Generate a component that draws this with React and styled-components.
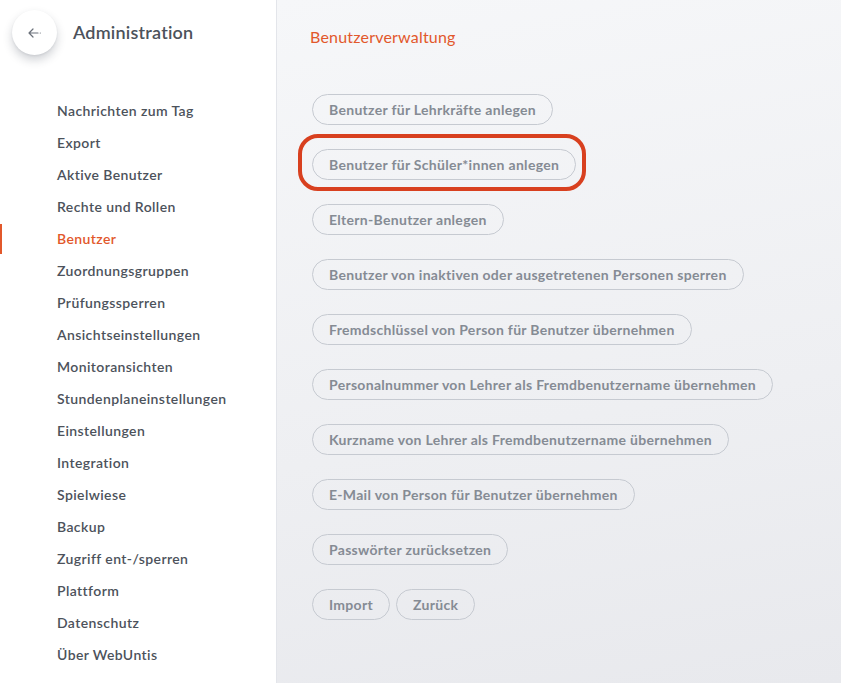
import React from 'react';
import styled, { createGlobalStyle } from 'styled-components';

const GlobalStyle = createGlobalStyle`
  html, body {
    margin: 0;
    padding: 0;
  }
  body {
    font-family: Lato, "Open Sans", "Liberation Sans", sans-serif;
    -webkit-font-smoothing: antialiased;
  }
`;

const Layout = styled.div`
  display: flex;
  width: 841px;
  height: 683px;
  overflow: hidden;
`;

const Sidebar = styled.aside`
  width: 276px;
  flex-shrink: 0;
  background: #ffffff;
  border-right: 1px solid #e3e5ea;
  display: flex;
  flex-direction: column;
`;

const SidebarHeader = styled.div`
  display: flex;
  align-items: center;
  gap: 16px;
  padding: 10px 0 0 12px;
  height: 45px;
`;

const BackButton = styled.button`
  width: 45px;
  height: 45px;
  border-radius: 50%;
  border: none;
  background: #ffffff;
  box-shadow: 0 5px 10px rgba(40, 50, 70, 0.22), 0 1px 2px rgba(40, 50, 70, 0.08);
  display: flex;
  align-items: center;
  justify-content: center;
  padding: 0;
  cursor: pointer;
`;

const Title = styled.h1`
  margin: 0 0 1px;
  font-size: 18px;
  font-weight: 600;
  color: #4c525b;
  letter-spacing: 0.2px;
`;

const NavList = styled.nav`
  display: flex;
  flex-direction: column;
  margin-top: 40px;
`;

const NavItem = styled.a`
  position: relative;
  display: block;
  height: 32px;
  line-height: 32px;
  padding-left: 57px;
  font-size: 14px;
  font-weight: 600;
  letter-spacing: 0.4px;
  color: ${p => (p.$active ? '#e2582b' : '#4c525b')};
  text-decoration: none;
  cursor: pointer;

  &::before {
    content: '';
    display: ${p => (p.$active ? 'block' : 'none')};
    position: absolute;
    left: 0;
    top: 1px;
    bottom: 1px;
    width: 2px;
    background: #e2582b;
  }
`;

const Main = styled.main`
  flex: 1;
  background: linear-gradient(170deg, #f6f7f9 0%, #eeeff2 60%, #e8e9ed 100%);
  padding: 27px 0 0 33px;
  display: flex;
  flex-direction: column;
`;

const SectionTitle = styled.h2`
  margin: 0 0 47px;
  font-size: 16px;
  font-weight: 400;
  letter-spacing: 0.2px;
  color: #e2582b;
  line-height: 20px;
`;

const ButtonList = styled.div`
  display: flex;
  flex-direction: column;
  align-items: flex-start;
  gap: 24px;
  padding-left: 2px;
`;

const ButtonRow = styled.div`
  display: flex;
  gap: 6px;
`;

const Highlight = styled.div`
  position: relative;

  &::after {
    content: '';
    position: absolute;
    top: -15px;
    bottom: -11px;
    left: -14px;
    right: -10px;
    border: 4px solid #d8401f;
    border-radius: 20px;
    pointer-events: none;
  }
`;

const PillButton = styled.button`
  height: 31px;
  padding: 0 16px;
  border: 1px solid #c6cad1;
  border-radius: 16px;
  background: transparent;
  font-family: inherit;
  font-size: 14px;
  font-weight: 700;
  letter-spacing: 0.3px;
  color: #858b94;
  cursor: pointer;
  white-space: nowrap;
`;

const navItems = [
  'Nachrichten zum Tag',
  'Export',
  'Aktive Benutzer',
  'Rechte und Rollen',
  'Benutzer',
  'Zuordnungsgruppen',
  'Prüfungssperren',
  'Ansichtseinstellungen',
  'Monitoransichten',
  'Stundenplaneinstellungen',
  'Einstellungen',
  'Integration',
  'Spielwiese',
  'Backup',
  'Zugriff ent-/sperren',
  'Plattform',
  'Datenschutz',
  'Über WebUntis',
];

const actions = [
  'Benutzer für Lehrkräfte anlegen',
  'Benutzer für Schüler*innen anlegen',
  'Eltern-Benutzer anlegen',
  'Benutzer von inaktiven oder ausgetretenen Personen sperren',
  'Fremdschlüssel von Person für Benutzer übernehmen',
  'Personalnummer von Lehrer als Fremdbenutzername übernehmen',
  'Kurzname von Lehrer als Fremdbenutzername übernehmen',
  'E-Mail von Person für Benutzer übernehmen',
  'Passwörter zurücksetzen',
];

export default function App() {
  return (
    <>
      <GlobalStyle />
      <Layout>
        <Sidebar>
          <SidebarHeader>
            <BackButton aria-label="Zurück">
              <svg width="14" height="10" viewBox="0 0 14 10" fill="none">
                <path d="M5 1L1 5l4 4M1 5h9" stroke="#6b717a" strokeWidth="1.2" strokeLinecap="round" strokeLinejoin="round" />
                <circle cx="12.3" cy="5" r="0.6" fill="#6b717a" />
              </svg>
            </BackButton>
            <Title>Administration</Title>
          </SidebarHeader>
          <NavList>
            {navItems.map(item => (
              <NavItem key={item} $active={item === 'Benutzer'}>
                {item}
              </NavItem>
            ))}
          </NavList>
        </Sidebar>
        <Main>
          <SectionTitle>Benutzerverwaltung</SectionTitle>
          <ButtonList>
            {actions.map((a, i) =>
              i === 1 ? (
                <Highlight key={a}>
                  <PillButton>{a}</PillButton>
                </Highlight>
              ) : (
                <PillButton key={a}>{a}</PillButton>
              )
            )}
            <ButtonRow>
              <PillButton>Import</PillButton>
              <PillButton>Zurück</PillButton>
            </ButtonRow>
          </ButtonList>
        </Main>
      </Layout>
    </>
  );
}
